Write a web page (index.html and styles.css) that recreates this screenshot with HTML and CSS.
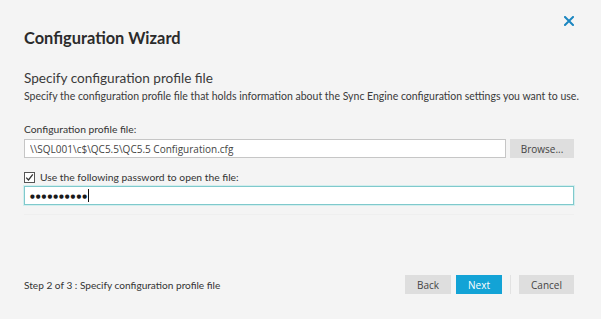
FILE: index.html
```html
<!DOCTYPE html>
<html lang="en">
<head>
    <meta charset="UTF-8">
    <meta name="viewport" content="width=device-width, initial-scale=1.0">
    <title>Configuration Wizard</title>
    <link rel="stylesheet" href="styles.css">
</head>
<body>
    <div class="wizard">
        <div class="top-bar">
            <button class="close-btn" title="Close">
                <svg width="10" height="10" viewBox="0 0 10 10">
                    <path d="M1 1 L9 9 M9 1 L1 9" stroke="#1b86c0" stroke-width="2" stroke-linecap="square"/>
                </svg>
            </button>
        </div>

        <h1 class="title">Configuration Wizard</h1>

        <h2 class="step-title">Specify configuration profile file</h2>
        <p class="step-desc">Specify the configuration profile file that holds information about the Sync Engine configuration settings you want to use.</p>

        <label class="field-label" for="profileFile">Configuration profile file:</label>
        <div class="file-row">
            <input class="text-input" id="profileFile" type="text" value="\\SQL001\c$\QC5.5\QC5.5 Configuration.cfg">
            <button class="btn btn-grey browse">Browse...</button>
        </div>

        <label class="check-label">
            <span class="check-box">
                <svg width="9" height="9" viewBox="0 0 9 9">
                    <path d="M1.2 4.6 L3.5 7 L7.8 1.4" fill="none" stroke="#333" stroke-width="1.3"/>
                </svg>
            </span>
            Use the following password to open the file:
        </label>
        <div class="pass-input">
            <span class="dots">&#9679;&#9679;&#9679;&#9679;&#9679;&#9679;&#9679;&#9679;&#9679;&#9679;</span><span class="caret"></span>
        </div>

        <div class="divider"></div>

        <div class="footer">
            <span class="step-info">Step 2 of 3 : Specify configuration profile file</span>
            <div class="footer-btns">
                <button class="btn btn-grey">Back</button>
                <button class="btn btn-blue">Next</button>
                <span class="btn-sep"></span>
                <button class="btn btn-grey cancel">Cancel</button>
            </div>
        </div>
    </div>
</body>
</html>
```

FILE: styles.css
```css
body {
    margin: 0;
    padding: 0;
    background-color: #f4f4f4;
    font-family: "Lato", "DejaVu Sans", sans-serif;
    color: #333;
}

.wizard {
    width: 601px;
    height: 319px;
    box-sizing: border-box;
    padding: 0 27px 0 24px;
    display: flex;
    flex-direction: column;
}

.top-bar {
    display: flex;
    justify-content: flex-end;
    height: 26px;
    align-items: flex-end;
}

.close-btn {
    border: none;
    background: none;
    padding: 0;
    width: 10px;
    height: 10px;
    display: flex;
    cursor: pointer;
}

.title {
    font-size: 16.4px;
    font-weight: bold;
    color: #2b2b2b;
    margin: 2px 0 0 0;
    line-height: 20px;
}

.step-title {
    font-size: 13.6px;
    font-weight: normal;
    color: #3a3a3a;
    margin: 21px 0 0 0;
    line-height: 18px;
}

.step-desc {
    font-size: 10.5px;
    color: #3a3a3a;
    margin: 3px 0 0 0;
    line-height: 13px;
    white-space: nowrap;
}

.field-label {
    display: block;
    font-size: 10.3px;
    color: #333;
    margin-top: 20px;
    line-height: 13px;
}

.file-row {
    display: flex;
    gap: 4px;
    margin-top: 3px;
}

.text-input {
    flex: 1;
    height: 19px;
    box-sizing: border-box;
    border: 1px solid #c6c6c6;
    background: #fff;
    padding: 0 5px;
    font-family: "Open Sans", sans-serif;
    font-size: 10px;
    color: #444;
    outline: none;
}

.btn {
    height: 19px;
    border: none;
    font-family: "Open Sans", sans-serif;
    font-size: 10px;
    color: #444;
    padding: 0;
    cursor: pointer;
}

.btn-grey { background-color: #dedede; }

.btn-blue {
    background-color: #13a3d6;
    color: #fff;
}

.browse { width: 64px; }

.check-label {
    display: flex;
    align-items: center;
    gap: 5px;
    font-size: 10.3px;
    margin-top: 13px;
    line-height: 13px;
}

.check-box {
    width: 9px;
    height: 9px;
    border: 1px solid #555;
    background: #fff;
    display: flex;
}

.pass-input {
    height: 19px;
    box-sizing: border-box;
    border: 1px solid #7fc9cc;
    box-shadow: 0 0 0 1px #d3eeee;
    background: #fff;
    margin-top: 2px;
    padding: 0 4px 0 5px;
    display: flex;
    align-items: center;
}

.dots {
    font-family: "DejaVu Sans", sans-serif;
    font-size: 5.5px;
    letter-spacing: 1px;
    color: #1a1a1a;
}

.caret {
    width: 1px;
    height: 13px;
    background: #111;
    margin-left: 0;
}

.divider {
    height: 1px;
    background: #efefef;
    margin-top: 9px;
}

.footer {
    margin-top: auto;
    margin-bottom: 25px;
    display: flex;
    align-items: center;
    justify-content: space-between;
}

.step-info {
    font-size: 10.1px;
    color: #333;
}

.footer-btns {
    display: flex;
    align-items: center;
    gap: 5px;
}

.footer-btns .btn { width: 46px; }

.footer-btns .cancel { width: 55px; }

.btn-sep {
    width: 1px;
    height: 19px;
    background: #e2e2e2;
    margin: 0 3px;
}
```
